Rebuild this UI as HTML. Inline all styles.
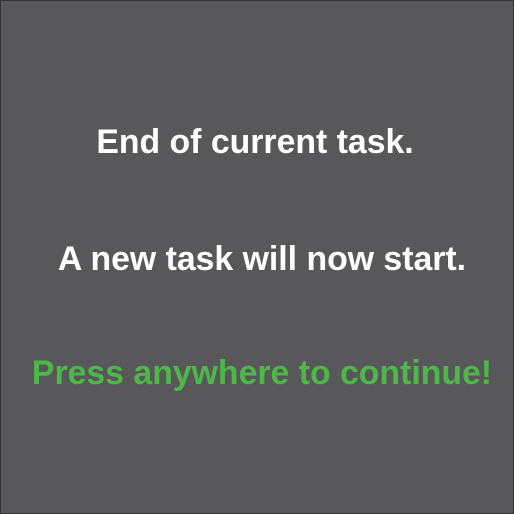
<!DOCTYPE html>
<html><head><style>
html,body{margin:0;padding:0}
body{width:514px;height:514px;background:#58585a;box-sizing:border-box;border:1px solid #333;position:relative;font-family:"Liberation Sans",Arial,sans-serif;font-weight:bold;font-size:33.8px;overflow:hidden}
.t{position:absolute;left:0;width:514px;text-align:center;white-space:nowrap;line-height:1}
</style></head><body>
<div class="t" style="top:125px;color:#fff;left:-3px">End of current task.</div>
<div class="t" style="top:242px;color:#fff;left:4px">A new task will now start.</div>
<div class="t" style="top:356px;color:#4db848;left:4px">Press anywhere to continue!</div>
</body></html>
